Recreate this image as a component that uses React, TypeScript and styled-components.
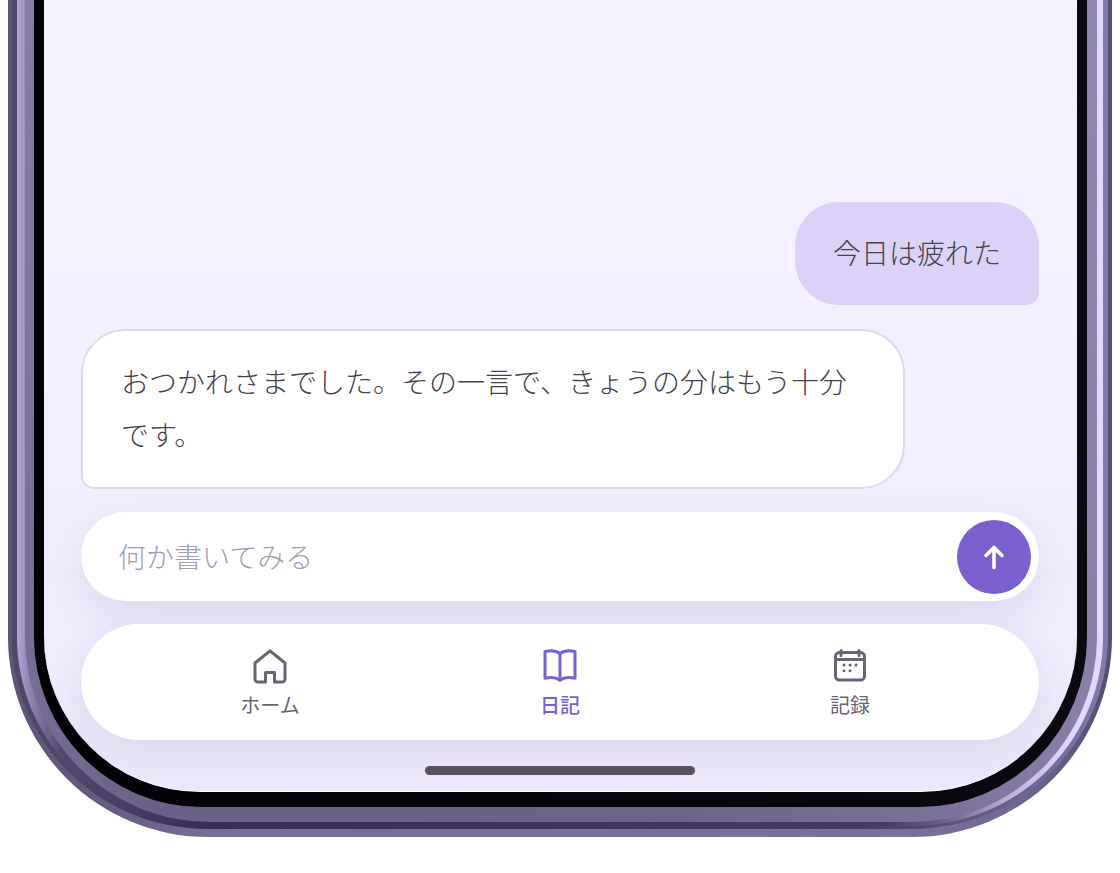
import React from "react";
import styled, { createGlobalStyle } from "styled-components";

const GlobalStyle = createGlobalStyle`
  *, *::before, *::after { box-sizing: border-box; }
  body {
    margin: 0;
    background: #ffffff;
    font-family: "Noto Sans CJK JP", sans-serif;
    font-weight: 300;
    color: #46414b;
  }
`;

const Page = styled.div`
  padding: 0 8px 36px;
`;

const Ring = styled.div<{ $pad: string; $radius: string; $fill: string }>`
  padding: ${(p) => p.$pad};
  border-radius: ${(p) => p.$radius};
  background: ${(p) => p.$fill};
`;

const Screen = styled.main`
  display: flex;
  flex-direction: column;
  padding: 202px 38px 16px 37px;
  border-bottom: 1px solid #ffffff;
  border-radius: 0 0 156px 156px / 0 0 155px 155px;
  background: linear-gradient(180deg, #f6f2ff 0%, #f3effe 50%, #f0ebfd 82%, #eee8fc 100%);
  overflow: hidden;
`;

const Messages = styled.section`
  display: flex;
  flex-direction: column;
  gap: 24px;
  font-size: 28px;
  line-height: 53px;
`;

const Bubble = styled.p<{ $mine?: boolean }>`
  margin: 0;
  max-width: 86%;
  align-self: ${(p) => (p.$mine ? "flex-end" : "flex-start")};
  padding: 24px 38px 26px;
  border: ${(p) => (p.$mine ? "0" : "2px solid #dedbe8")};
  border-radius: ${(p) => (p.$mine ? "44px 44px 13px 44px" : "44px 44px 44px 13px")};
  background: ${(p) => (p.$mine ? "#dcd1f6" : "#ffffff")};
`;

const Composer = styled.form`
  display: flex;
  align-items: center;
  height: 89px;
  margin-top: 23px;
  padding: 0 8px 0 37px;
  border-radius: 45px;
  background: #ffffff;
  box-shadow: 0 14px 44px rgba(70, 60, 100, 0.1);
`;

const Field = styled.input`
  flex: 1;
  min-width: 0;
  padding: 0 0 2px;
  border: 0;
  outline: 0;
  background: transparent;
  font: inherit;
  font-size: 28px;
  line-height: 40px;
  color: #46414b;
  &::placeholder { color: #a39db4; opacity: 1; }
`;

const Send = styled.button`
  display: grid;
  place-items: center;
  width: 74px;
  height: 74px;
  padding: 0;
  border: 0;
  border-radius: 50%;
  background: #7b5fcf;
  color: #ffffff;
`;

const TabBar = styled.nav`
  display: flex;
  margin-top: 23px;
  padding: 24px 44px 20px;
  border-radius: 58px;
  background: #ffffff;
  box-shadow: 0 14px 44px rgba(70, 60, 100, 0.1);
`;

const Tab = styled.a<{ $active?: boolean }>`
  display: flex;
  flex: 1;
  flex-direction: column;
  align-items: center;
  gap: 6px;
  font-size: 20px;
  font-weight: ${(p) => (p.$active ? 500 : 400)};
  line-height: 30px;
  text-decoration: none;
  color: ${(p) => (p.$active ? "#7b5fcf" : "#6a6374")};
`;

const HomeBar = styled.div`
  width: 270px;
  height: 9px;
  margin: 26px auto 0;
  border-radius: 5px;
  background: #59515f;
`;

const Icon = ({ children, size = 36 }: { children: React.ReactNode; size?: number }) => (
  <svg
    width={size}
    height={size}
    viewBox={`0 0 ${size} ${size}`}
    fill="none"
    stroke="currentColor"
    strokeWidth="3"
    strokeLinecap="round"
    strokeLinejoin="round"
    aria-hidden="true"
  >
    {children}
  </svg>
);

const rings = [
  {
    pad: "0 4px 8px",
    radius: "0 0 200px 200px",
    fill: "linear-gradient(90deg, #5d5577 0%, #655b80 8%, #776c94 18%, #7a6f96 82%, #6f6690 92%, #564f72 99%)",
  },
  {
    pad: "0 5px 3px",
    radius: "0 0 196px 196px / 0 0 192px 192px",
    fill: "linear-gradient(90deg, #514868 0%, #4f4668 6%, #392d57 17%, #463b61 78%, #62587f 88%, #7469a0 95%, #847aaa 100%)",
  },
  {
    pad: "0 6px 4px 8px",
    radius: "0 0 191px 191px / 0 0 189px 189px",
    fill: "linear-gradient(90deg, #b1a4d6 0%, #9588b5 1%, #544a6e 4%, #392d57 17%, #463b61 80%, #71668f 86%, #b9addb 91%, #e0d8ff 97%)",
  },
  {
    pad: "0 10px 15px 9px",
    radius: "0 0 185px 185px / 0 0 185px 185px",
    fill: "linear-gradient(180deg, rgba(150,142,185,.5) 0%, transparent 78%), linear-gradient(90deg, #776d96 0%, #6b6085 12%, #6d6287 60%, #7c7199 86%, #8b80aa 100%)",
  },
  {
    pad: "0 10px 15px",
    radius: "0 0 167px 167px / 0 0 170px 170px",
    fill: "linear-gradient(90deg, #030108, #0a0810)",
  },
];

const PhoneFrame = ({ children }: { children: React.ReactNode }) =>
  rings.reduceRight<React.ReactNode>(
    (inner, r) => (
      <Ring $pad={r.pad} $radius={r.radius} $fill={r.fill}>
        {inner}
      </Ring>
    ),
    children,
  );

export default function App() {
  return (
    <>
      <GlobalStyle />
      <Page lang="ja">
        <PhoneFrame>
          <Screen>
            <Messages>
              <Bubble $mine>今日は疲れた</Bubble>
              <Bubble>おつかれさまでした。その一言で、きょうの分はもう十分です。</Bubble>
            </Messages>
            <Composer onSubmit={(e) => e.preventDefault()}>
              <Field type="text" aria-label="何か書いてみる" placeholder="何か書いてみる" />
              <Send type="submit" aria-label="送信">
                <Icon size={28}>
                  <path strokeWidth="3.6" d="M14 24.5V4.5M6 12.5l8-8 8 8" />
                </Icon>
              </Send>
            </Composer>
            <TabBar>
              <Tab href="#home">
                <Icon>
                  <path d="M18 2.8 3 15V31a3 3 0 0 0 3 3h7.5V24.5h9V34H30a3 3 0 0 0 3-3V15z" />
                </Icon>
                ホーム
              </Tab>
              <Tab href="#diary" $active aria-current="page">
                <Icon>
                  <path d="M18 5.5C14 2.5 8 2.2 3 3.6v26.6c5-1.2 11-1 15 2 4-3 10-3.2 15-2V3.6C28 2.2 22 2.5 18 5.5zM18 5.5v26" />
                </Icon>
                日記
              </Tab>
              <Tab href="#records">
                <Icon>
                  <rect x="3.5" y="4.5" width="29" height="27.5" rx="4" />
                  <path d="M4 11.5h28M9 2.5v5M27 2.5v5" />
                  <path d="M12 17h.01M18 17h.01M24 17h.01M12 22.8h.01M18 22.8h.01" />
                </Icon>
                記録
              </Tab>
            </TabBar>
            <HomeBar />
          </Screen>
        </PhoneFrame>
      </Page>
    </>
  );
}
